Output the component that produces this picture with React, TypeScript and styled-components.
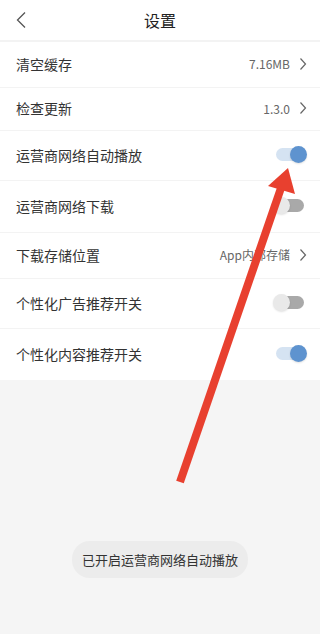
import React from "react";
import styled, { createGlobalStyle } from "styled-components";

const Global = createGlobalStyle`
  html, body { margin: 0; padding: 0; background: #f5f5f5; }
  body { font-family: "Noto Sans CJK SC", "Noto Sans", sans-serif; }
`;

const Page = styled.div`
  position: relative;
  width: 320px;
  height: 634px;
  display: flex;
  flex-direction: column;
  background: #f5f5f5;
  overflow: hidden;
`;

const Header = styled.div`
  height: 40px;
  display: grid;
  grid-template-columns: 40px 1fr 40px;
  align-items: center;
  background: #fff;
  border-bottom: 2px solid #f3f3f3;
`;

const Back = styled.div`
  display: flex;
  align-items: center;
  justify-content: center;
  padding-left: 2px;
`;

const Title = styled.div`
  text-align: center;
  font-size: 16px;
  color: #222;
  font-weight: 400;
`;

const List = styled.div`
  display: flex;
  flex-direction: column;
  background: #fff;
`;

const Row = styled.div<{ $h: number; $last?: boolean }>`
  height: ${(p) => p.$h}px;
  display: flex;
  align-items: center;
  justify-content: space-between;
  padding: 0 13px 2px 16px;
  border-bottom: ${(p) => (p.$last ? "none" : "1px solid #f3f3f3")};
  box-sizing: border-box;
`;

const Label = styled.div`
  font-size: 14px;
  color: #333;
`;

const Right = styled.div`
  display: flex;
  align-items: center;
  gap: 9px;
`;

const Value = styled.div`
  font-size: 12px;
  color: #666;
`;

const Track = styled.div<{ $on: boolean }>`
  position: relative;
  width: 28px;
  height: 13px;
  border-radius: 7px;
  margin-right: 3px;
  background: ${(p) => (p.$on ? "#d5e3f2" : "#a9a9a9")};
`;

const Knob = styled.div<{ $on: boolean }>`
  position: absolute;
  top: -2px;
  ${(p) => (p.$on ? "right: -3px;" : "left: -3px;")}
  width: 17px;
  height: 17px;
  border-radius: 50%;
  background: ${(p) => (p.$on ? "#5e93cf" : "#e9e9e9")};
  box-shadow: 0 1px 2px rgba(0, 0, 0, 0.12);
`;

const Rest = styled.div`
  flex: 1;
  display: flex;
  flex-direction: column;
  justify-content: flex-end;
  align-items: center;
  padding-bottom: 56px;
`;

const Toast = styled.div`
  height: 37px;
  width: 176px;
  border-radius: 18px;
  background: #ececec;
  display: flex;
  align-items: center;
  justify-content: center;
  font-size: 13px;
  color: #333;
`;

const Overlay = styled.svg`
  position: absolute;
  left: 0;
  top: 0;
  pointer-events: none;
`;

const Chevron = () => (
  <svg width="8" height="14" viewBox="0 0 8 14">
    <path d="M1.5 1.5 L6.5 7 L1.5 12.5" fill="none" stroke="#666" strokeWidth="1.2" />
  </svg>
);

const Toggle = ({ on }: { on: boolean }) => (
  <Track $on={on}>
    <Knob $on={on} />
  </Track>
);

type Item = { label: string; h: number; value?: string; toggle?: boolean; on?: boolean };

const items: Item[] = [
  { label: "清空缓存", h: 46, value: "7.16MB" },
  { label: "检查更新", h: 43, value: "1.3.0" },
  { label: "运营商网络自动播放", h: 50, toggle: true, on: true },
  { label: "运营商网络下载", h: 52, toggle: true, on: false },
  { label: "下载存储位置", h: 46, value: "App内部存储" },
  { label: "个性化广告推荐开关", h: 50, toggle: true, on: false },
  { label: "个性化内容推荐开关", h: 51, toggle: true, on: true },
];

export default function App() {
  return (
    <Page>
      <Global />
      <Header>
        <Back>
          <svg width="12" height="18" viewBox="0 0 12 18">
            <path d="M10 1.5 L2.5 9 L10 16.5" fill="none" stroke="#555" strokeWidth="1.3" />
          </svg>
        </Back>
        <Title>设置</Title>
        <div />
      </Header>
      <List>
        {items.map((it, i) => (
          <Row key={it.label} $h={it.h} $last={i === items.length - 1}>
            <Label>{it.label}</Label>
            <Right>
              {it.value && <Value>{it.value}</Value>}
              {it.value && <Chevron />}
              {it.toggle && <Toggle on={!!it.on} />}
            </Right>
          </Row>
        ))}
      </List>
      <Rest>
        <Toast>已开启运营商网络自动播放</Toast>
      </Rest>
      <Overlay width="320" height="634" viewBox="0 0 320 634">
        <line x1="180" y1="482" x2="281" y2="188" stroke="#e8402f" strokeWidth="8" />
        <polygon points="288,168 268,186 295,194" fill="#e8402f" />
      </Overlay>
    </Page>
  );
}
